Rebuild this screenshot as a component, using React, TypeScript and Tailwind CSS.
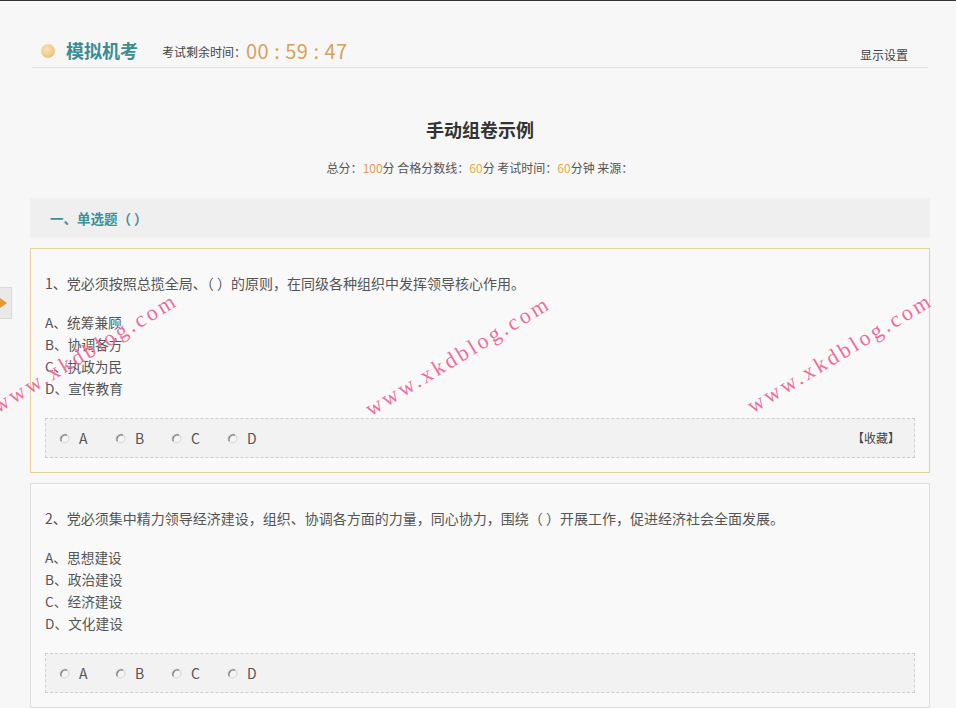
import React from "react";

type Question = {
  no: number;
  text: string;
  options: string[];
  active?: boolean;
  showFav?: boolean;
};

const questions: Question[] = [
  {
    no: 1,
    text: "党必须按照总揽全局、（ ）的原则，在同级各种组织中发挥领导核心作用。",
    options: ["统筹兼顾", "协调各方", "执政为民", "宣传教育"],
    active: true,
    showFav: true,
  },
  {
    no: 2,
    text: "党必须集中精力领导经济建设，组织、协调各方面的力量，同心协力，围绕（ ）开展工作，促进经济社会全面发展。",
    options: ["思想建设", "政治建设", "经济建设", "文化建设"],
  },
];

const letters = ["A", "B", "C", "D"];

function Radio() {
  return (
    <svg width="11" height="11" viewBox="0 0 11 11" className="shrink-0">
      <circle cx="5.5" cy="5.5" r="4.5" fill="#f4f4f4" stroke="#d4d4d4" strokeWidth="1" />
      <path d="M2.3 8.2 A4.5 4.5 0 0 1 8.2 2.3" fill="none" stroke="#7a7a7a" strokeWidth="1.2" />
    </svg>
  );
}

function Watermark({ x, y }: { x: number; y: number }) {
  return (
    <div
      className="pointer-events-none absolute -translate-x-1/2 -translate-y-1/2 -rotate-[31deg] whitespace-nowrap text-[22px] leading-none tracking-[3px] text-[#ef6d98]"
      style={{ left: x, top: y, fontFamily: '"Liberation Serif", serif' }}
    >
      www.xkdblog.com
    </div>
  );
}

function QuestionCard({ q }: { q: Question }) {
  return (
    <div
      className={`border bg-[#f9f9f9] px-[14px] pt-[23px] pb-[14px] ${
        q.active ? "border-[#e6cf9f]" : "border-[#dedede]"
      }`}
    >
      <p className="text-[14px] leading-[22px] text-[#555]">
        {q.no}、{q.text}
      </p>
      <div className="mt-[17px] flex flex-col text-[13.7px] leading-[22px] text-[#555]">
        {q.options.map((o, i) => (
          <p key={o}>
            {letters[i]}、{o}
          </p>
        ))}
      </div>
      <div className="mt-[19px] flex h-[40px] items-center justify-between border border-dashed border-[#cfcfcf] bg-[#f2f2f2] pl-[13px] pr-[14px]">
        <div className="flex items-center gap-[27px]">
          {letters.map((l) => (
            <label key={l} className="flex w-[29px] items-center gap-[9px] text-[14px] text-[#555]">
              <Radio />
              <span>{l}</span>
            </label>
          ))}
        </div>
        {q.showFav && <span className="text-[12px] text-[#444]">【收藏】</span>}
      </div>
    </div>
  );
}

export default function App() {
  return (
    <div
      className="relative h-[708px] w-[956px] overflow-hidden border-t border-[#333] bg-[#f7f7f7]"
      style={{ fontFamily: '"Noto Sans CJK SC", "Noto Sans", sans-serif' }}
    >
      {/* side tab */}
      <div className="absolute left-0 top-[286px] flex h-[32px] w-[12px] items-center border border-l-0 border-[#d8d8d8] bg-[#e9e9e9]">
        <span className="h-0 w-0 border-y-[5px] border-l-[7px] border-y-transparent border-l-[#e59a35]" />
      </div>

      <div className="ml-[30px] w-[900px]">
        {/* header */}
        <div className="mx-[2px] flex h-[67px] items-end justify-between border-b border-[#e2e2e2] pb-[3px]">
          <div className="flex items-center">
            <span className="ml-[9px] h-[14px] w-[14px] rounded-full bg-[radial-gradient(circle_at_40%_35%,#fbe3b4,#e9b66a)]" />
            <span className="ml-[11px] text-[18px] font-bold text-[#3a8d93]">模拟机考</span>
            <span className="ml-[24px] mt-[3px] text-[12px] text-[#444]">考试剩余时间：</span>
            <span className="text-[20px] leading-none tracking-[0.5px] text-[#d6a35e]">00 : 59 : 47</span>
          </div>
          <span className="mr-[20px] text-[12px] text-[#444]">显示设置</span>
        </div>

        {/* title */}
        <h1 className="mt-[48px] text-center text-[18px] font-bold leading-[26px] text-[#333]">手动组卷示例</h1>
        <p className="mt-[18px] text-center text-[12px] leading-[16px] text-[#555]">
          总分：<span className="text-[#e29c55]">100</span>分 合格分数线：
          <span className="text-[#e2ad4f]">60</span>分 考试时间：
          <span className="text-[#e2ad4f]">60</span>分钟 来源：
        </p>

        {/* section */}
        <div className="mt-[22px] flex h-[40px] items-center bg-[#efefef] pl-[20px] text-[13.5px] font-bold text-[#3d8f99]">
          一、单选题（ ）
        </div>

        <div className="mt-[10px] flex flex-col gap-[10px]">
          {questions.map((q) => (
            <QuestionCard key={q.no} q={q} />
          ))}
        </div>
      </div>

      <Watermark x={85} y={352} />
      <Watermark x={458} y={355} />
      <Watermark x={840} y={352} />
    </div>
  );
}
